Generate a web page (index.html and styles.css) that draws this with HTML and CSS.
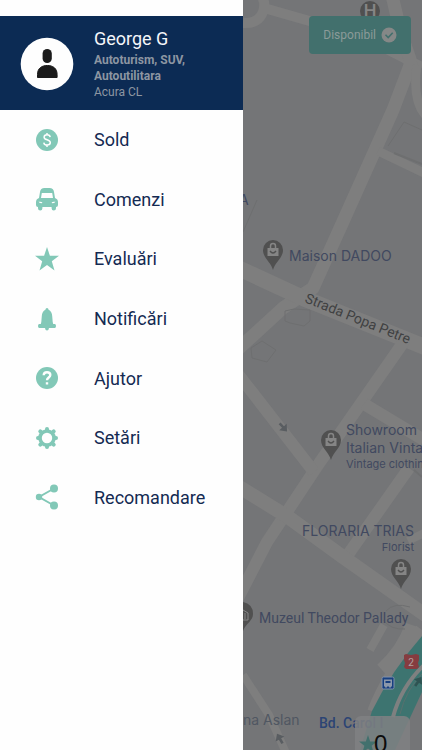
FILE: index.html
```html
<!DOCTYPE html>
<html lang="ro">
<head>
    <meta charset="UTF-8">
    <meta name="viewport" content="width=device-width, initial-scale=1.0">
    <title>Meniu</title>
    <link rel="stylesheet" href="styles.css">
</head>
<body>
    <div class="app">

        <!-- Side menu -->
        <aside class="drawer">
            <header class="profile">
                <svg class="avatar" viewBox="0 0 54 54" aria-hidden="true">
                    <circle cx="27" cy="27" r="26.3" fill="#fefefe"/>
                    <rect x="22.6" y="12" width="9.2" height="14" rx="4.6" fill="#1b1b1b"/>
                    <path d="M17.500 40.500v-3C17.500 31 22 28.500 27.300 28.500s9.800 2.500 9.800 9v3z" fill="#1b1b1b" stroke="#1b1b1b" stroke-linejoin="round"/>
                </svg>
                <div class="profile-info">
                    <h1>George G</h1>
                    <p><strong>Autoturism, SUV, Autoutilitara</strong></p>
                    <p>Acura CL</p>
                </div>
            </header>

            <nav class="menu">
                <a class="menu-item" href="#sold">
                    <svg class="icon" viewBox="0 0 24 24" aria-hidden="true">
                        <circle cx="12" cy="12" r="11"/>
                        <path class="cut" d="M15.200 9.200C15 7.600 13.800 6.800 12.100 6.800c-1.800 0-3 .9-3 2.400 0 3.200 6.200 2 6.200 5.400 0 1.600-1.400 2.500-3.200 2.500S9 16.200 8.800 14.600M12 5v2M12 17v2"/>
                    </svg>
                    <span>Sold</span>
                </a>
                <a class="menu-item" href="#comenzi">
                    <svg class="icon" viewBox="0 0 24 24" aria-hidden="true">
                        <path fill-rule="evenodd" d="M4 11L5 5Q5.500 1 9.500 1h5q4 0 4.500 4l1 6q3 1 3 4v3q0 2-2 2v1.300a2.200 2.200 0 0 1-4.400 0V20H7.400v1.300a2.200 2.200 0 0 1-4.400 0V20q-2 0-2-2v-3q0-3 3-4zM6 11h12l-.8-5H6.800zM3.500 14.800q1 1.800 4 1.200-.5-1.800-4-1.200zM20.500 14.800q-1 1.800-4 1.200.5-1.800 4-1.200z"/>
                    </svg>
                    <span>Comenzi</span>
                </a>
                <a class="menu-item" href="#evaluari">
                    <svg class="icon" viewBox="0 0 24 24" aria-hidden="true">
                        <path d="M12 0l2.900 8.800H24l-7.200 5.500L19.500 23.500 12 18 4.500 23.500l2.700-9.200L0 8.800h9.100z"/>
                    </svg>
                    <span>Evaluări</span>
                </a>
                <a class="menu-item" href="#notificari">
                    <svg class="icon" viewBox="0 0 24 24" aria-hidden="true">
                        <path d="M12 1q1.400 0 1.600 1.800Q17 4.500 17.200 9l.5 6 .5 2H20q1 .3 1 2t-1 2h-6q-.3 2.500-2 2.500T10 21H4q-1-.3-1-2t1-2h1.800l.5-2 .5-6q.2-4.500 3.600-6.200Q10.600 1 12 1z"/>
                    </svg>
                    <span>Notificări</span>
                </a>
                <a class="menu-item" href="#ajutor">
                    <svg class="icon" viewBox="0 0 24 24" aria-hidden="true">
                        <circle cx="12" cy="12" r="11"/>
                        <path class="cut thick" d="M8.700 9.300C8.700 7.300 10 6.200 12 6.200s3.300 1.100 3.300 2.900c0 2.400-3.300 2.500-3.300 5.200M12 16.300v2.200"/>
                    </svg>
                    <span>Ajutor</span>
                </a>
                <a class="menu-item" href="#setari">
                    <svg class="icon" viewBox="0 0 24 24" aria-hidden="true">
                        <g class="line">
                            <circle cx="12" cy="12" r="7" stroke-width="3.600"/>
                            <path stroke-width="4" stroke-linecap="round" d="M12 3v1M12 20v1M3 12h1M20 12h1M5.300 5.300l.7.7M18 18l.7.7M18.700 5.300l-.7.7M6 18l-.7.7"/>
                        </g>
                    </svg>
                    <span>Setări</span>
                </a>
                <a class="menu-item" href="#recomandare">
                    <svg class="icon" viewBox="0 0 24 24" aria-hidden="true">
                        <path class="line" stroke-width="2" d="M19 3.500L4 12l15 8.500"/>
                        <circle cx="19" cy="3.500" r="4"/>
                        <circle cx="4" cy="12" r="3.200"/>
                        <circle cx="19" cy="20.500" r="4"/>
                    </svg>
                    <span>Recomandare</span>
                </a>
            </nav>
        </aside>

        <!-- Map behind the menu -->
        <main class="map">
            <svg class="map-canvas" viewBox="243 0 179 750" preserveAspectRatio="xMinYMin slice">
                <defs>
                    <g id="pin">
                        <path d="M0 19C-2 11-10 7-10-1a10 10 0 0 1 20 0C10 7 2 11 0 19z" fill="#505050"/>
                        <path d="M-5.500-3h11v8h-11z" fill="#858585"/>
                        <path d="M-2.500-3v-2a2.500 2.500 0 0 1 5 0v2" fill="none" stroke="#858585" stroke-width="1.500"/>
                        <path d="M-3 0q3 4 6 0" fill="none" stroke="#505050" stroke-width="1.300"/>
                    </g>
                    <path id="arrow" d="M-5-1.300h5V-5l6 5-6 5V1.300h-5z"/>
                </defs>

                <!-- Streets -->
                <g class="roads">
                    <path stroke-width="10" d="M243 23q14 1 19-9t-1-19M264 8l63 18 50 18 45 23"/>
                    <path stroke-width="13" d="M392-5q8 38 18 64v14M412 60l-19 50-52 116-28 62-30 20-48 44"/>
                    <path stroke-width="9" d="M417 65q-5 34 8 50M378 151l46 22"/>
                    <path stroke-width="16" d="M238 268l65 30 124 50"/>
                    <path stroke-width="12" d="M405 340l-85 122-53 80-32 62"/>
                    <path stroke-width="12" d="M238 374l76 98M364 404l60 36M409 468l-62 88"/>
                    <path stroke-width="14" d="M236 485l52 32 55 40 85 60"/>
                    <path stroke-width="8" d="M243 675l26 40 18 40M384 625l-14 25M408 541l16-8"/>
                    <path stroke-width="14" d="M412 625q-8 25-30 45M422 630q-34 46-48 82"/>
                </g>
                <g fill="none" stroke="#6e6f70">
                    <path d="M285 311l9-2 16 1v11l-6 5-14-3-5-2zM251 348l11-7 14 9-9 12-15-4zM388 146l16-24 18 8M243 232l14-32M386 611q8-9 24-4M383 620q8 10 22 9"/>
                    <path stroke-width="2" d="M394 153l28 11M414 470l8 7"/>
                </g>

                <!-- Boulevard -->
                <path d="M422 636q-30 34-50 75l-12 39h35l27-58z" fill="#3d7470"/>
                <path d="M424 665q-23 22-31 52" fill="none" stroke="#7e8080" stroke-width="4"/>
                <path d="M422 674q-16 16-22 40" fill="none" stroke="#58706e" stroke-width="1"/>
                <g fill="#595d61">
                    <use href="#arrow" transform="translate(283 427) rotate(48)"/>
                    <use href="#arrow" transform="translate(280 739) rotate(-120)"/>
                    <use href="#arrow" transform="translate(418 682) rotate(-55)" fill="#2f5352"/>
                </g>

                <!-- Places -->
                <circle cx="370" cy="11" r="10" fill="#505050"/>
                <text class="hospital" x="370" y="17" text-anchor="middle">H</text>
                <use href="#pin" x="273" y="251"/>
                <use href="#pin" x="331" y="441"/>
                <use href="#pin" x="401" y="570"/>
                <path d="M243 602q10 2 10 12c0 7-7 9-10 17z" fill="#505050"/>
                <path d="M243 610l5 3v7h-5M245 613v6" fill="none" stroke="#858585"/>

                <g class="labels">
                    <text x="239" y="205">A</text>
                    <text x="289" y="261">Maison DADOO</text>
                    <text class="street" transform="translate(304 302) rotate(22)">Strada Popa Petre</text>
                    <text x="346" y="435">Showroom</text>
                    <text x="346" y="453">Italian Vintage</text>
                    <text class="small" x="346" y="468">Vintage clothing</text>
                    <text x="414" y="536" text-anchor="end">FLORARIA TRIAS</text>
                    <text class="small" x="414" y="551" text-anchor="end">Florist</text>
                    <text class="museum" x="259" y="623">Muzeul Theodor Pallady</text>
                    <text class="area" x="243" y="725">na Aslan</text>
                    <text class="station" x="319" y="728">Bd. Carol I</text>
                </g>

                <rect x="382" y="677" width="12" height="12" rx="1.500" fill="#173f80" stroke="#8091ab"/>
                <path fill-rule="evenodd" d="M384 679.500h8v7h-1v1h-2v-1h-2v1h-2v-1h-1zM385.500 681v2h5v-2z" fill="#8c98aa"/>
                <path d="M404 655l2-1 5 1 5-1 3 1v5l-1 3 1 4-2 2h-11l-2-2 1-4-1-3z" fill="#863c40"/>
                <text class="route" x="411" y="666" text-anchor="middle">2</text>
            </svg>

            <button class="status" type="button">
                Disponibil
                <svg class="status-check" viewBox="0 0 16 16" aria-hidden="true">
                    <circle cx="8" cy="8" r="7.500" fill="#858887"/>
                    <path d="M4.500 7.800l2.700 2.700 4.500-4.700" fill="none" stroke="#42706d" stroke-width="1.600"/>
                </svg>
            </button>

            <div class="score">
                <svg class="score-star" viewBox="0 0 24 24" aria-hidden="true">
                    <path d="M12 0l2.900 8.800H24l-7.200 5.500L19.500 23.500 12 18 4.500 23.500l2.700-9.200L0 8.800h9.100z"/>
                </svg>
                <span>0</span>
            </div>
        </main>

    </div>
</body>
</html>
```

FILE: styles.css
```css
* {
    box-sizing: border-box;
}

body {
    margin: 0;
    font-family: Roboto, sans-serif;
    background: #747577;
}

.app {
    display: flex;
    height: 100vh;
    overflow: hidden;
}

/* Side menu */
.drawer {
    flex: 0 0 243px;
    padding-top: 16px;
    background: #fefefe;
}

.profile {
    display: flex;
    align-items: center;
    gap: 20px;
    padding: 12px 20px 10px;
    background: #0c2b54;
    color: #8d96a2;
}

.avatar {
    flex: none;
    width: 54px;
    height: 54px;
}

.profile-info h1 {
    margin: 0 0 2px;
    font-size: 18px;
    font-weight: 400;
    line-height: 22px;
    color: #f4f6f9;
}

.profile-info p {
    margin: 0;
    font-size: 12px;
    line-height: 16px;
}

.menu {
    display: flex;
    flex-direction: column;
    min-height: 417px;
}

.menu-item {
    flex: 1;
    display: flex;
    align-items: center;
    gap: 35px;
    padding: 0 35px;
    font-size: 18px;
    color: #142a52;
    text-decoration: none;
}

.icon {
    flex: none;
    width: 24px;
    height: 24px;
    fill: #82c8b7;
    overflow: visible;
}

.icon .cut {
    fill: none;
    stroke: #fefefe;
    stroke-width: 1.5px;
}

.icon .thick {
    stroke-width: 2.4px;
}

.icon .line {
    fill: none;
    stroke: #82c8b7;
}

/* Map */
.map {
    position: relative;
    flex: 1;
    overflow: hidden;
}

.map-canvas {
    display: block;
    width: 100%;
    height: 100%;
    font-family: Inter, sans-serif;
}

.roads {
    fill: none;
    stroke: #7e7e7e;
    stroke-linejoin: round;
}

.labels {
    font-size: 14px;
    fill: #414960;
}

.labels .small {
    font-size: 11px;
}

.labels .street {
    font-family: Roboto, sans-serif;
    fill: #404142;
}

.labels .museum {
    font-family: Roboto, sans-serif;
}

.labels .area {
    fill: #505762;
}

.labels .station {
    font-family: Roboto, sans-serif;
    font-weight: 500;
    fill: #2c4474;
}

.hospital {
    font-size: 17px;
    font-weight: 600;
    fill: #858585;
}

.route {
    font-size: 10px;
    fill: #b0a0a0;
}

.status {
    position: absolute;
    top: 16px;
    right: 11px;
    display: flex;
    align-items: center;
    gap: 5px;
    height: 38px;
    padding: 0 14px;
    border: none;
    border-radius: 4px;
    background: #42706d;
    color: #8b9b99;
    font-family: Roboto, sans-serif;
    font-size: 12px;
    cursor: pointer;
}

.status-check {
    width: 16px;
    height: 16px;
}

.score {
    position: absolute;
    right: 12px;
    bottom: 0;
    display: flex;
    width: 55px;
    height: 34px;
    padding: 18px 4px 0;
    border-radius: 6px 6px 0 0;
    background: rgba(128, 129, 130, 0.85);
    font-family: "Liberation Sans", sans-serif;
    font-size: 24px;
    line-height: 20px;
    color: #0c0c0c;
}

.score-star {
    width: 18px;
    height: 20px;
    margin-right: -3px;
    fill: #42706d;
}
```
